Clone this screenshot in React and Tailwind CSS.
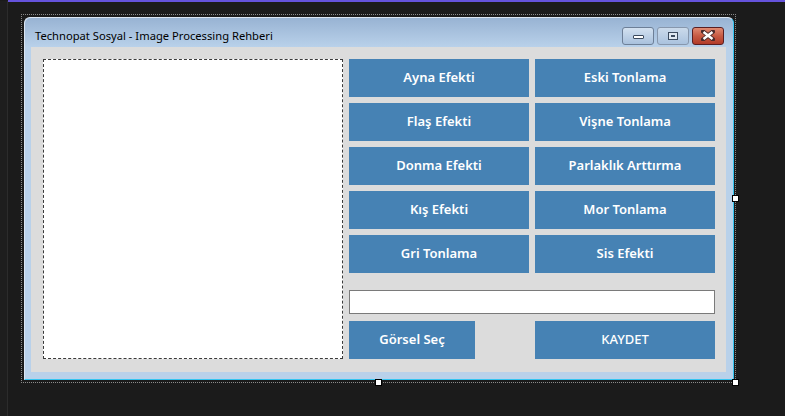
import React from "react";

const effects = [
  ["Ayna Efekti", "Eski Tonlama"],
  ["Flaş Efekti", "Vişne Tonlama"],
  ["Donma Efekti", "Parlaklık Arttırma"],
  ["Kış Efekti", "Mor Tonlama"],
  ["Gri Tonlama", "Sis Efekti"],
];

const FormButton = ({ label, className = "", weight = "font-semibold" }) => (
  <button
    className={`h-[38px] bg-[#4682b4] text-white text-[13px] flex items-center justify-center ${weight} ${className}`}
  >
    {label}
  </button>
);

const Handle = ({ className }) => (
  <div className={`absolute w-[7px] h-[7px] bg-white border border-black ${className}`} />
);

const App = () => {
  return (
    <div
      className="relative w-[785px] h-[416px] bg-[#1b1b1b] overflow-hidden flex flex-col"
      style={{ fontFamily: '"Noto Sans", "Open Sans", sans-serif' }}
    >
      {/* accent line */}
      <div className="h-[2px] bg-[#6553dc] ml-[8px] shrink-0" />

      <div className="flex flex-1 -mt-px">
        <div className="w-[8px] border-r border-[#2c2c2c] bg-[#1e1e1e]" />

        {/* designer selection */}
        <div className="ml-[13px] mt-[13px] w-[715px] h-[369px] border border-dotted border-[#8a8a8a] p-[2px]">
          {/* form window */}
          <div className="w-[710px] h-[363px] rounded-t-[6px] bg-[#b9d1ea] border-t border-l border-[#dbe6f3] border-r-[#34c4f0] border-b-[#34c4f0] border-r border-b flex flex-col">
            {/* title bar */}
            <div className="h-[29px] rounded-t-[6px] bg-gradient-to-b from-[#98b3d3] to-[#b9d1ea] flex items-center pl-[10px] pr-[9px] pt-[6px]">
              <span className="text-[11.2px] text-black flex-1 leading-none">
                Technopat Sosyal - Image Processing Rehberi
              </span>
              <div className="flex gap-[3px]">
                <div className="w-[32px] h-[18px] rounded-[3px] border border-[#6d7f97] bg-gradient-to-b from-[#d3e1f0] to-[#a9c1dd] flex items-center justify-center">
                  <div className="w-[11px] h-[4px] mt-[3px] bg-white border border-[#3b4a5e] rounded-[1px]" />
                </div>
                <div className="w-[32px] h-[18px] rounded-[3px] border border-[#8797ad] bg-gradient-to-b from-[#cbdaeb] to-[#aac2de] flex items-center justify-center">
                  <div className="w-[10px] h-[8px] border border-[#3b4a5e] bg-[#dfe8f2] flex items-center justify-center">
                    <div className="w-[4px] h-[2px] bg-[#3b4a5e]" />
                  </div>
                </div>
                <div className="w-[32px] h-[18px] rounded-[3px] border border-[#5a1f22] bg-gradient-to-b from-[#e08a72] via-[#c65a43] to-[#b23a28] flex items-center justify-center">
                  <svg width="14" height="11" viewBox="0 0 14 11">
                    <path
                      d="M2 1.5 L12 9.5 M12 1.5 L2 9.5"
                      stroke="#4a2a2a"
                      strokeWidth="4.2"
                      strokeLinecap="square"
                    />
                    <path
                      d="M2.5 2 L11.5 9 M11.5 2 L2.5 9"
                      stroke="#ffffff"
                      strokeWidth="2.4"
                    />
                  </svg>
                </div>
              </div>
            </div>

            {/* client area */}
            <div className="ml-[6px] w-[695px] h-[325px] bg-[#dcdcdc] pl-[12px] pt-[12px] flex gap-[6px]">
              <div className="w-[300px] h-[300px] shrink-0 bg-white border border-dashed border-[#3a3a3a]" />

              <div className="w-[366px] shrink-0 flex flex-col">
                <div className="grid grid-cols-[180px_180px] gap-[6px]">
                  {effects.map(([a, b]) => (
                    <React.Fragment key={a}>
                      <FormButton label={a} />
                      <FormButton label={b} />
                    </React.Fragment>
                  ))}
                </div>

                <div className="mt-[17px] h-[24px] bg-white border border-[#7a7a7a]" />

                <div className="mt-[7px] flex justify-between">
                  <FormButton label="Görsel Seç" className="w-[126px]" />
                  <FormButton label="KAYDET" className="w-[180px]" weight="font-medium" />
                </div>
              </div>
            </div>
          </div>
        </div>
      </div>

      <Handle className="left-[375px] top-[379px]" />
      <Handle className="left-[732px] top-[379px]" />
      <Handle className="left-[732px] top-[195px]" />
    </div>
  );
};

export default App;
